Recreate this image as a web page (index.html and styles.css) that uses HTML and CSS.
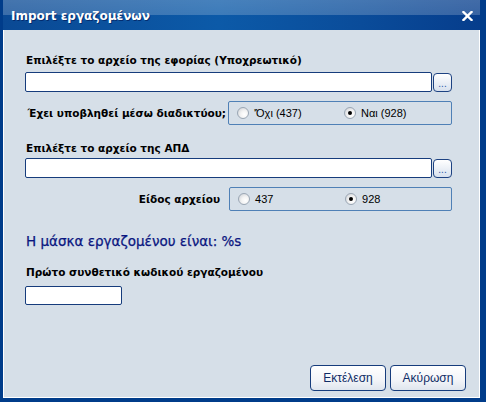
FILE: index.html
```html
<!DOCTYPE html>
<html lang="el">
<head>
<meta charset="utf-8">
<title>Import εργαζομένων</title>
<link rel="stylesheet" href="styles.css">
</head>
<body>
<div class="window">
  <div class="titlebar">
    <span class="title">Import εργαζομένων</span>
    <svg class="close" width="11" height="10" viewBox="0 0 11 10"><path d="M1.5 1 L9.5 9 M9.5 1 L1.5 9" stroke="#fff" stroke-width="2.4" stroke-linecap="square"/></svg>
  </div>
  <div class="content">
    <div class="form">
      <div class="label l1">Επιλέξτε το αρχείο της εφορίας (Υποχρεωτικό)</div>
      <div class="filerow r1">
        <div class="input wide"></div>
        <div class="browse">...</div>
      </div>
      <div class="optrow r2">
        <div class="label optlabel w1">Έχει υποβληθεί μέσω διαδικτύου;</div>
        <div class="group">
          <div class="opt"><span class="radio"></span><span>'Όχι (437)</span></div>
          <div class="opt"><span class="radio on"></span><span>Ναι (928)</span></div>
        </div>
      </div>
      <div class="label l3">Επιλέξτε το αρχείο της ΑΠΔ</div>
      <div class="filerow r3">
        <div class="input wide"></div>
        <div class="browse">...</div>
      </div>
      <div class="optrow r4">
        <div class="label optlabel w2">Είδος αρχείου</div>
        <div class="group">
          <div class="opt"><span class="radio"></span><span>437</span></div>
          <div class="opt"><span class="radio on"></span><span>928</span></div>
        </div>
      </div>
      <div class="mask">Η μάσκα εργαζομένου είναι: %s</div>
      <div class="label l5">Πρώτο συνθετικό κωδικού εργαζομένου</div>
      <div class="input small"></div>
    </div>
    <div class="buttons">
      <div class="btn">Εκτέλεση</div>
      <div class="btn">Ακύρωση</div>
    </div>
  </div>
</div>
</body>
</html>
```
FILE: styles.css
```css
html, body { margin: 0; padding: 0; }
body { width: 486px; height: 402px; overflow: hidden; }
.window {
  width: 486px; height: 402px; box-sizing: border-box;
  background: #003c8a;
  padding: 0 6px 4px 3px;
  display: flex; flex-direction: column;
}
.titlebar {
  height: 30px; flex: none;
  display: flex; align-items: center; justify-content: space-between;
  padding: 0 7px 0 8px;
  background:
    linear-gradient(to bottom, rgba(255,255,255,0.24) 0, rgba(255,255,255,0.2) 15px, rgba(255,255,255,0) 15px),
    linear-gradient(to right, #0a4994 0%, #0c5aa8 45%, #0a4c9a 75%, #063d8c 100%);
}
.title {
  font-family: "DejaVu Sans", sans-serif; font-weight: bold; font-size: 12px;
  color: #fff; text-shadow: 1px 1px 0 rgba(0,20,80,0.6);
  padding-top: 2px;
}
.close { display: block; margin-top: 1px; }
.content {
  flex: 1; background: #d6dfe8;
  border-left: 1px solid #fff; border-right: 1px solid #fff; border-bottom: 1px solid #fff;
  padding: 0 13px 6px 21px;
  display: flex; flex-direction: column;
}
.form { margin-right: 14px; display: flex; flex-direction: column; }
.label {
  font-family: "DejaVu Sans", sans-serif; font-weight: bold; font-size: 10.5px;
  color: #000; height: 14px; line-height: 14px; padding-left: 1px;
}
.l1 { margin-top: 23px; }
.l3 { margin-top: 16px; }
.filerow { display: flex; align-items: flex-end; gap: 1px; }
.r1 { margin-top: 5px; }
.r3 { margin-top: 3px; }
.input {
  background: #fff; border: 1px solid #163c7c; border-radius: 2px; box-sizing: border-box;
}
.wide { width: 408px; height: 20px; }
.small { width: 97px; height: 19px; margin-top: 7px; }
.browse {
  width: 19px; height: 19px; box-sizing: border-box;
  border: 1px solid #1d4282; border-radius: 4px;
  background: linear-gradient(#ffffff, #d8e1ee);
  font-family: "Liberation Sans", sans-serif; font-size: 10px; color: #2a5aa8;
  text-align: center; line-height: 20px;
}
.optrow { display: flex; align-items: center; height: 24px; }
.r2 { margin-top: 9px; gap: 2px; }
.r4 { margin-top: 9px; gap: 9px; margin-left: 1px; }
.optlabel { text-align: right; }
.w1 { width: 200px; }
.w2 { width: 194px; }
.group {
  width: 224px; height: 24px; box-sizing: border-box;
  border: 1px solid #4f80b6; border-radius: 2px;
  display: grid; grid-template-columns: 107px 1fr; align-items: center;
  padding-left: 8px;
}
.opt {
  display: flex; align-items: center; gap: 5px;
  font-family: "Liberation Sans", sans-serif; font-size: 11px; color: #000;
}
.radio {
  width: 12px; height: 12px; box-sizing: border-box; border-radius: 50%;
  border: 1px solid #9aa6b4;
  background: radial-gradient(circle at 65% 65%, #ffffff 0, #f4f4f4 40%, #c8ccd2 100%);
  display: flex; align-items: center; justify-content: center;
}
.radio.on::after {
  content: ""; width: 4px; height: 4px; border-radius: 50%; background: #000;
}
.mask {
  margin-top: 22px; height: 16px; line-height: 16px; padding-left: 1px;
  font-family: "DejaVu Sans", sans-serif; font-size: 13.5px; color: #0a1680;
  -webkit-text-stroke: 0.25px #0a1680;
}
.l5 { margin-top: 16px; }
.buttons {
  margin-top: auto; display: flex; justify-content: flex-end; gap: 4px;
}
.btn {
  width: 76px; height: 26px; box-sizing: border-box;
  border: 1px solid #163c7c; border-radius: 4px;
  background: linear-gradient(#ffffff 0%, #f2f4f8 60%, #dfe5ee 100%);
  font-family: "Liberation Sans", sans-serif; font-size: 12px; color: #0f2c66;
  display: flex; align-items: center; justify-content: center;
}
```
